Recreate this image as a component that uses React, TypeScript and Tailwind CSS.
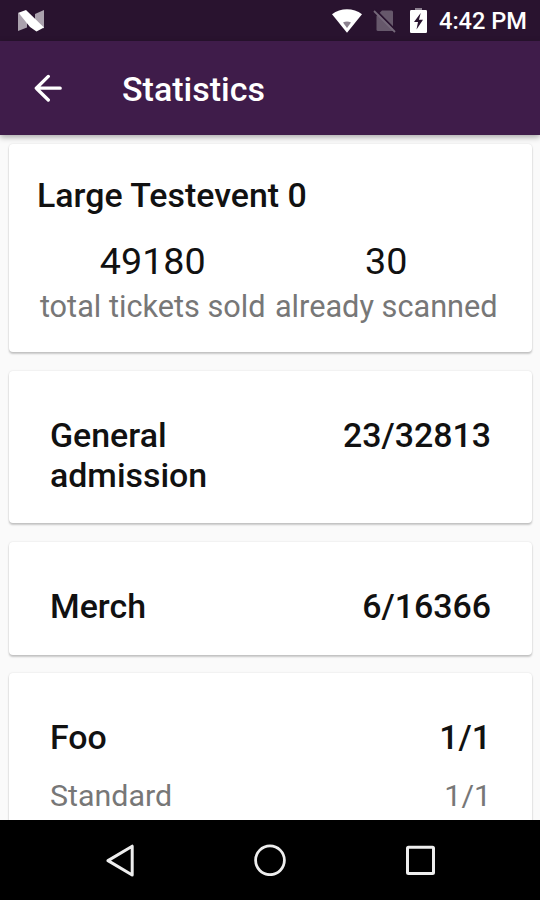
import type { ReactNode } from 'react'

interface TicketRow {
  name: string
  count: string
}

interface CategoryProps extends TicketRow {
  className: string
  nameClassName?: string
  variations?: TicketRow[]
}

function StatusBar() {
  return (
    <header className="h-[41px] shrink-0 bg-[#29132f] flex items-center pl-[18px] pr-[13px]">
      <svg width="26" height="22" viewBox="0 0 26 22" className="mr-auto">
        <path d="M0 2.5L9 10V17.5L0 21Z" fill="#aaa1ad" />
        <path d="M17 4L26 0V18.5L17 12Z" fill="#aaa1ad" />
        <path d="M0.5 2.8L8 0L26 17.5L18.5 21.5L12 17Z" fill="#fff" />
      </svg>
      <svg width="30" height="24" viewBox="0 0 30 24" className="mr-[11px]">
        <path d="M0 5.2C8.5-1.3 21.5-1.3 30 5.2L15 23.8Z" fill="#fff" />
        <path d="M11 13.5Q15 11.5 19 13.5L15 19Z" fill="#8b818e" />
      </svg>
      <svg width="23" height="24" viewBox="0 0 23 24" className="mr-[14px]">
        <path d="M9 1.5H18.5Q20 1.5 20 3V22H5Q3.5 22 3.5 20.5V7Z" fill="#66586b" />
        <path d="M2.2 0.8L23 21.6" stroke="#29132f" strokeWidth="2" />
        <path d="M1 2L22 23" stroke="#75697a" strokeWidth="1.8" />
      </svg>
      <svg width="17" height="25" viewBox="0 0 17 25" className="mr-[12px]">
        <path d="M5 3V0H12V3Z" fill="#8d8191" />
        <rect y="2" width="17" height="23" rx="1.2" fill="#fff" />
        <path d="M10.7 5L4 14H8L6.5 21.5L13 11.7H9Z" fill="#29132f" />
      </svg>
      <span className="mt-[3px] text-[23.6px] leading-none font-medium text-white whitespace-nowrap">4:42 PM</span>
    </header>
  )
}

function AppBar() {
  return (
    <div className="h-[94px] shrink-0 bg-[#3f1c4a] flex items-center pl-[34px] relative shadow-[0_2px_6px_rgba(0,0,0,0.35)]">
      <svg width="28" height="28" viewBox="0 0 28 28" fill="none" stroke="#fff" strokeWidth="3.3" strokeLinecap="round" strokeLinejoin="round">
        <path d="M14.3 2.4L2.3 14.2L14.3 26M2.3 14.2H26.2" />
      </svg>
      <h1 className="ml-[60px] mt-[1px] text-[34px] leading-none font-medium text-white">Statistics</h1>
    </div>
  )
}

function Card({ className, children }: { className: string; children: ReactNode }) {
  return (
    <section className={`shrink-0 bg-white rounded-[4px] shadow-[0_2px_2px_rgba(0,0,0,0.2),0_0_2px_rgba(0,0,0,0.13)] ${className}`}>
      {children}
    </section>
  )
}

function CategoryCard({ name, count, className, nameClassName = '', variations = [] }: CategoryProps) {
  return (
    <Card className={`pl-[41px] pr-[41px] pt-[45px] ${className}`}>
      <div className="flex justify-between items-start text-[33.9px] leading-[39.5px] font-medium text-[#111]">
        <h2 className={nameClassName}>{name}</h2>
        <span>{count}</span>
      </div>
      {variations.map((v) => (
        <div key={v.name} className="mt-[20px] flex justify-between text-[30.4px] leading-[36px] text-[#777]">
          <span>{v.name}</span>
          <span>{v.count}</span>
        </div>
      ))}
    </Card>
  )
}

function NavigationBar() {
  return (
    <nav className="h-[80px] shrink-0 bg-black relative flex items-center justify-between pl-[106px] pr-[105px]">
      <svg width="28" height="34" viewBox="0 0 28 34" fill="none" stroke="#eee" strokeWidth="3" strokeLinejoin="round">
        <path d="M26.2 3.2V32L2 17.6Z" />
      </svg>
      <svg width="32" height="32" viewBox="0 0 32 32" fill="none" stroke="#eee" strokeWidth="2.8">
        <circle cx="16" cy="16.3" r="14.4" />
      </svg>
      <svg width="29" height="30" viewBox="0 0 29 30" fill="none" stroke="#eee" strokeWidth="3">
        <rect x="1.5" y="2.2" width="26" height="26.3" rx="1" />
      </svg>
    </nav>
  )
}

export default function App() {
  return (
    <div className="w-[540px] h-[900px] overflow-hidden flex flex-col bg-[#fafafa] font-[Roboto,sans-serif]">
      <StatusBar />
      <AppBar />
      <main className="flex-1 min-h-0 overflow-hidden flex flex-col pl-[9px] pr-[8px] pt-[9px]">
        <Card className="h-[208px] px-[28px] pt-[32px] mb-[19px]">
          <h2 className="text-[33.9px] leading-[40px] font-medium text-[#111]">Large Testevent 0</h2>
          <div className="mt-[22px] flex text-center whitespace-nowrap">
            <div className="w-[232px]">
              <div className="text-[37.7px] leading-[46px] text-[#111]">49180</div>
              <div className="text-[30.7px] leading-[46px] text-[#777]">total tickets sold</div>
            </div>
            <div className="w-[236px]">
              <div className="text-[37.7px] leading-[46px] text-[#111]">30</div>
              <div className="text-[30.7px] leading-[46px] text-[#777]">already scanned</div>
            </div>
          </div>
        </Card>
        <CategoryCard name="General admission" count="23/32813" className="h-[152px] mb-[19px]" nameClassName="w-[200px]" />
        <CategoryCard name="Merch" count="6/16366" className="h-[113px] mb-[18px]" />
        <CategoryCard name="Foo" count="1/1" className="h-[180px]" variations={[{ name: 'Standard', count: '1/1' }]} />
      </main>
      <NavigationBar />
    </div>
  )
}
